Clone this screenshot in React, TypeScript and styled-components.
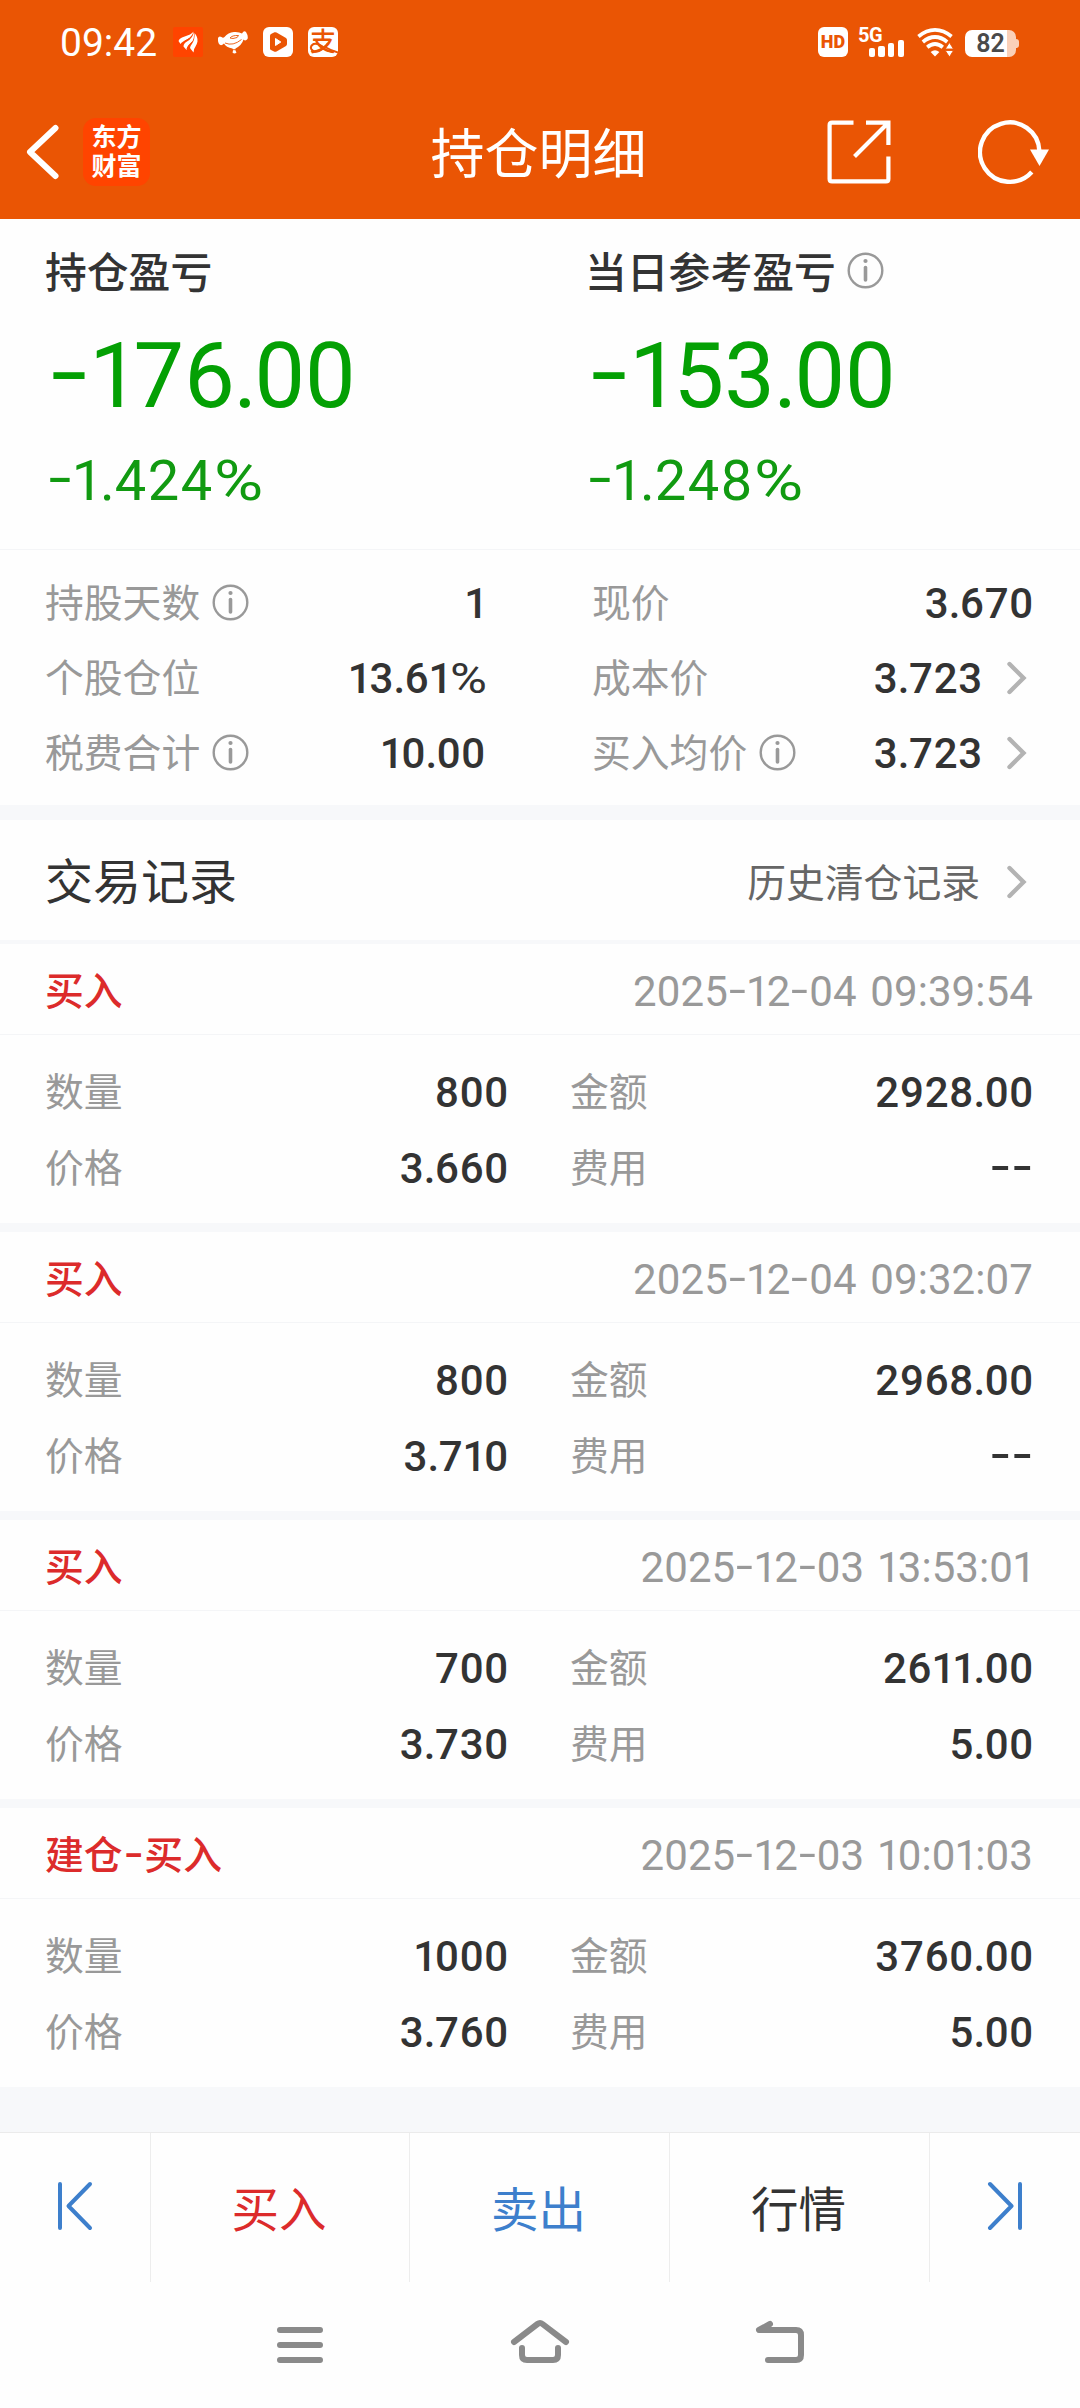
import React from "react";
import styled, { createGlobalStyle } from "styled-components";

const ORANGE = "#ea5504";

const GlobalStyle = createGlobalStyle`
  *, *::before, *::after { box-sizing: border-box; }
  body {
    margin: 0;
    background: #fefefe;
    font-family: Roboto, "Noto Sans CJK SC", sans-serif;
    color: #333;
  }
  svg { display: block; flex: none; }
`;

const Page = styled.div`
  width: 1080px;
  height: 2408px;
  display: flex;
  flex-direction: column;
  overflow: hidden;
  background: #fefefe;
`;

/* ---------- numerals ---------- */

const FigureRun = styled.span`
  white-space: nowrap;
`;

const One = styled.span`
  margin-left: -0.02em;
  margin-right: -0.07em;
`;

const Dot = styled.span`
  margin-left: -0.015em;
  margin-right: -0.03em;
`;

const Dash = styled.span<{ $w: number }>`
  display: inline-block;
  width: ${(p) => p.$w}em;
  letter-spacing: 0;
  text-align: center;
  transform: translateY(-0.05em) scaleX(1.45);
`;

const PercentSign = styled.span`
  display: inline-block;
  width: 0.85em;
  letter-spacing: 0;
  font-weight: 400;
  transform: scaleX(1.2);
  transform-origin: left center;
`;

/* Proportional figures: narrow "1" and ".", wide "-" and "%". */
const Figures = ({ text, dash = 0.47 }: { text: string; dash?: number }) => (
  <FigureRun>
    {text.split(/([-1.%])/).map((part, i) => {
      if (part === "1") return <One key={i}>1</One>;
      if (part === ".") return <Dot key={i}>.</Dot>;
      if (part === "-") return <Dash key={i} $w={dash}>-</Dash>;
      if (part === "%") return <PercentSign key={i}>%</PercentSign>;
      return part;
    })}
  </FigureRun>
);

/* ---------- header ---------- */

const Header = styled.header`
  height: 219px;
  flex: none;
  background: ${ORANGE};
  color: #fff;
`;

const StatusBar = styled.div`
  height: 84px;
  display: flex;
  justify-content: space-between;
  padding: 0 61px 0 60px;
`;

const StatusLeft = styled.div`
  display: flex;
  align-items: center;
  gap: 15px;
`;

const StatusRight = styled.div`
  display: flex;
  align-items: center;
`;

const Clock = styled.span`
  width: 98px;
  padding-top: 2px;
  font-size: 39px;
  line-height: 44px;
  white-space: nowrap;
`;

const AppBadge = styled.span<{ $bg: string; $radius: number }>`
  width: 30px;
  height: 30px;
  border-radius: ${(p) => p.$radius}px;
  background: ${(p) => p.$bg};
  display: flex;
  align-items: center;
  justify-content: center;
`;

const PayBadge = styled(AppBadge)`
  position: relative;
  color: ${ORANGE};
  font-size: 26px;
  font-weight: 500;
  line-height: 28px;

  svg {
    position: absolute;
    left: 0;
    top: 0;
  }
`;

const HdBadge = styled(AppBadge)`
  color: ${ORANGE};
  font-size: 18px;
  font-weight: 900;
  line-height: 30px;
`;

const Signal = styled.span`
  width: 45px;
  height: 30px;
  margin-left: 11px;
  position: relative;
`;

const SignalLabel = styled.span`
  position: absolute;
  left: -1px;
  top: -1px;
  font-size: 20px;
  line-height: 18px;
  font-weight: 700;
  letter-spacing: -0.5px;
`;

const SignalBars = styled.span`
  height: 30px;
  display: flex;
  align-items: flex-end;
  justify-content: flex-end;
  gap: 3.5px;
`;

const Bar = styled.i<{ $h: number }>`
  width: 6.2px;
  height: ${(p) => p.$h}px;
  border-radius: 2px;
  background: #fff;
`;

const Wifi = styled.span`
  margin-left: 13px;
`;

const Battery = styled.span`
  margin: 3px 0 0 11px;
  display: flex;
  align-items: center;
`;

const BatteryBody = styled.span`
  width: 51px;
  height: 27px;
  border-radius: 7px;
  background: linear-gradient(to right, #fff 42px, #fad0b8 42px);
  color: #4a4a4a;
  font-size: 25px;
  font-weight: 600;
  line-height: 28px;
  text-align: center;
`;

const BatteryTip = styled.i`
  width: 3px;
  height: 9px;
  border-radius: 0 3px 3px 0;
  background: #fad0b8;
`;

const TitleBar = styled.div`
  height: 135px;
  display: grid;
  grid-template-columns: 1fr auto 1fr;
  align-items: center;
  padding: 0 29px 0 26px;
`;

const NavLeft = styled.div`
  display: flex;
  align-items: center;
  gap: 24px;
`;

const NavRight = styled.div`
  display: flex;
  align-items: center;
  justify-content: flex-end;
  gap: 87px;
`;

const Logo = styled.span`
  width: 67px;
  height: 68px;
  border-radius: 13px;
  background: #ff4400;
  padding: 5px 0 0 8.5px;
  display: flex;
  flex-direction: column;
  font-size: 25px;
  font-weight: 700;
  line-height: 29px;
  white-space: nowrap;
`;

const Title = styled.h1`
  margin: 0;
  padding-top: 8px;
  font-size: 54px;
  line-height: 70px;
  font-weight: 400;
`;

/* ---------- summary ---------- */

const Summary = styled.section`
  height: 331px;
  flex: none;
  display: grid;
  grid-template-columns: 540px 540px;
  padding-top: 26px;
  border-bottom: 1px solid #f4f5f7;
`;

const SummaryCell = styled.div`
  padding-left: 45px;
  display: flex;
  flex-direction: column;
`;

const SummaryLabel = styled.div`
  height: 54px;
  display: flex;
  align-items: center;
  gap: 11px;
  font-size: 41.8px;
  font-weight: 500;
  line-height: 54px;

  span {
    padding-top: 3px;
  }

  svg {
    margin-top: -3px;
  }
`;

const Profit = styled.div`
  margin-top: 28px;
  padding-left: 2px;
  font-size: 90px;
  line-height: 100px;
  color: #04a004;
`;

const Percent = styled.div`
  margin-top: 19px;
  padding-left: 2px;
  font-size: 56px;
  line-height: 70px;
  letter-spacing: 1.6px;
  color: #119a11;
`;

/* ---------- stats ---------- */

const Stats = styled.section`
  height: 270px;
  flex: none;
  display: grid;
  grid-template-columns: 440px 441px;
  grid-auto-rows: 75px;
  column-gap: 107px;
  padding: 15px 47px 0 45px;
  border-bottom: 15px solid #f7f8fa;
`;

const StatRow = styled.div`
  display: flex;
  align-items: center;
`;

const Label = styled.span`
  display: flex;
  align-items: center;
  gap: 12px;
  font-size: 38.8px;
  line-height: 56px;
  color: #999;

  span {
    padding-top: 3px;
  }

  svg {
    margin-top: -1px;
  }
`;

const Value = styled.span`
  margin-left: auto;
  padding-top: 3px;
  font-size: 42px;
  line-height: 56px;
  font-weight: 500;
  letter-spacing: 0.8px;
  margin-right: -1px;
`;

/* ---------- trade records ---------- */

const SectionHead = styled.div`
  height: 124px;
  flex: none;
  display: flex;
  align-items: center;
  padding: 3px 47px 0 45px;
  border-bottom: 4px solid #f7f8fa;
`;

const SectionTitle = styled.h2`
  margin: 0 auto 0 0;
  padding-top: 2px;
  font-size: 48px;
  line-height: 64px;
  font-weight: 400;
`;

const HistoryLink = styled.a`
  display: flex;
  align-items: center;
  font-size: 38.8px;
  line-height: 56px;
  color: #666;

  span {
    padding-top: 4px;
    margin-right: 2px;
  }
`;

const Record = styled.article`
  height: 288px;
  flex: none;
  border-bottom: 9px solid #f7f8fa;

  &:last-of-type {
    height: 279px;
    border-bottom: 0;
  }
`;

const RecordHead = styled.div`
  height: 91px;
  display: flex;
  align-items: center;
  justify-content: space-between;
  padding: 5px 47px 0 45px;
  border-bottom: 1px solid #f4f5f7;
`;

const Side = styled.span`
  font-size: 38.8px;
  font-weight: 500;
  line-height: 56px;
  color: #dc2b2b;
`;

const Time = styled.time`
  font-size: 42px;
  line-height: 56px;
  letter-spacing: 0.1px;
  word-spacing: 3px;
  color: #999;
`;

const RecordBody = styled.div`
  display: grid;
  grid-template-columns: 463px 463px;
  grid-auto-rows: 76px;
  column-gap: 62px;
  padding: 18px 47px 0 45px;
`;

/* ---------- bottom ---------- */

const Spacer = styled.div`
  height: 45px;
  flex: none;
  background: #f7f8fa;
`;

const ActionBar = styled.nav`
  height: 150px;
  flex: none;
  display: grid;
  grid-template-columns: 151px 259px 260px 260px 150px;
  border-top: 1px solid #ebebeb;
`;

const Action = styled.button<{ $color?: string }>`
  display: flex;
  align-items: center;
  justify-content: center;
  padding: 0 2px 2px 0;
  border: 0;
  border-right: 1px solid #ededed;
  background: none;
  font: inherit;
  font-size: 47.5px;
  color: ${(p) => p.$color ?? "#333"};

  &:last-child {
    border-right: 0;
  }
`;

const ArrowAction = styled(Action)`
  padding: 0 0 4px;
`;

const SystemNav = styled.div`
  flex: 1;
  display: grid;
  grid-template-columns: repeat(3, 240px);
  justify-content: center;
  justify-items: center;
  padding-top: 35px;
`;

/* ---------- icons ---------- */

const InfoIcon = () => (
  <svg width="37" height="37" viewBox="0 0 37 37" fill="none" stroke="#999">
    <circle cx="18.5" cy="18.5" r="16.8" strokeWidth="2.4" />
    <path d="M18.5 15.5V28" strokeWidth="3.6" strokeLinecap="round" />
    <circle cx="18.5" cy="9" r="2.1" fill="#999" stroke="none" />
  </svg>
);

const Chevron = () => (
  <svg width="51" height="34" viewBox="0 0 51 34" fill="none" stroke="#b3b3b3" strokeWidth="4.4" strokeLinecap="round">
    <path d="M27.500 3L41.500 17L27.500 31" />
  </svg>
);

const BackIcon = () => (
  <svg width="33" height="56" viewBox="0 0 33 56" fill="none" stroke="#fff" strokeWidth="6" strokeLinecap="round" strokeLinejoin="round">
    <path d="M29.5 4L4 28L29.5 52" />
  </svg>
);

const ShareIcon = () => (
  <svg width="64" height="64" viewBox="0 0 64 64" fill="none" stroke="#fff" strokeWidth="4.2">
    <path d="M26.5 2.6H5Q2.6 2.6 2.6 5V59Q2.6 61.4 5 61.4H59Q61.4 61.4 61.4 59V36.5" />
    <path d="M39 2.6H61.4V25M61 3L27.5 36.5" />
  </svg>
);

const RefreshIcon = () => (
  <svg width="73" height="66" viewBox="0 0 73 66">
    <path d="M53.8 53A29.7 29.7 0 1 1 61.4 32" fill="none" stroke="#fff" strokeWidth="4.4" />
    <path d="M52 30.500H71L61.500 47Z" fill="#fff" />
  </svg>
);

const WingIcon = () => (
  <svg width="30" height="30" viewBox="0 0 30 30" fill="#fff">
    <path d="M5.500 14Q6 11.500 9 10.500L17 7.500Q20 5.500 20.500 4.500Q19.500 9 14 12.500Q9 14.500 7.500 17Z" />
    <path d="M10.500 19.500Q10.500 16.500 14 14.500Q20 11 20.800 5Q22 12 18 16Q14 19 13.500 23Z" />
    <path d="M17 21Q17.500 18.500 19.500 16Q22 12 21.500 6Q25 10 24.500 14.500Q24 17 22.500 19.500Q20.500 22 20.500 25.500Z" />
    <path d="M8.500 17.500Q12 13 16.500 11.500M14 21.500Q16 17 19.500 14.500" fill="none" stroke="#ff4400" strokeWidth="0.9" />
  </svg>
);

const DogIcon = () => (
  <svg width="30" height="30" viewBox="0 0 30 30" fill="#fff">
    <path d="M0 11Q1 8.500 3.500 10Q5 11.500 6.500 10Q10 5.500 16 5Q21 4.600 24 6.500Q26 3 28 5Q30.500 9 29.500 12Q27.500 14.500 25.500 12.500Q24 18 17.500 21.500Q17 23.500 18.500 25.500Q16.500 27.500 14.500 25.500Q15.500 23 14.500 21.500Q8 20.500 6 16.500Q3 19.500 1 17Q-0.500 14 0 11Z" />
    <path d="M12 11Q14 8.200 20.500 8.500Q20.500 11 15 11.500ZM7 16Q15 19.500 23.500 12.500M13.500 22.700H18.500" fill="none" stroke={ORANGE} strokeWidth="0.9" />
  </svg>
);

const PlayIcon = () => (
  <svg width="30" height="30" viewBox="0 0 30 30">
    <path d="M7 8.500Q7 7.500 8 7L11.500 5.300Q12.500 5 13.500 5.500L23 11Q24 11.800 24 13V17Q24 18.200 23 19L13.500 24.500Q12.500 25 11.500 24.700L8 23Q7 22.500 7 21.500Z" fill={ORANGE} />
    <path d="M12.500 11.500L17.800 15L12.500 18.500Z" fill="#fff" stroke="#fff" strokeWidth="1" strokeLinejoin="round" />
  </svg>
);

const Swoosh = () => (
  <svg width="30" height="30" viewBox="0 0 30 30" fill="none" stroke={ORANGE} strokeWidth="2">
    <path d="M17 21.500Q10 15.500 5.500 17Q2 18.800 3.200 22Q5.500 26 11 24Q16 22 20 16M16 19.500Q22 23 30 25.500" />
  </svg>
);

const WifiIcon = () => (
  <svg width="37" height="30" viewBox="0 0 38 30" preserveAspectRatio="none" fill="none" stroke="#fff" strokeWidth="3.8">
    <path d="M1.500 9.500Q9.500 2.800 18.500 2.800T35.500 9.500" />
    <path d="M6 15Q12 10 18.500 10T31 15" />
    <path d="M10.500 20.300Q14.500 17 18.500 17T26.500 20.300" />
    <path d="M14 25Q18.500 21.500 23 25L18.500 29.500Z" fill="#fff" stroke="none" />
    <path d="M29 22L33.300 15.500L37.500 22ZM29 23.500L33.300 30L37.500 23.500Z" fill="#fff" stroke={ORANGE} strokeWidth="0.9" />
  </svg>
);

const FirstIcon = () => (
  <svg width="38" height="50" viewBox="0 0 38 50" fill="none" stroke="#3d7fcc" strokeWidth="4" strokeLinecap="round" strokeLinejoin="round">
    <path d="M4 3V47M34 3L12.500 25L34 47" />
  </svg>
);

const LastIcon = () => (
  <svg width="38" height="50" viewBox="0 0 38 50" fill="none" stroke="#3d7fcc" strokeWidth="4" strokeLinecap="round" strokeLinejoin="round">
    <path d="M34 3V47M4 3L25.500 25L4 47" />
  </svg>
);

const SysIcon = ({ d }: { d: string }) => (
  <svg width="60" height="50" viewBox="0 0 60 50" fill="none" stroke="#8a8a8a" strokeWidth="6" strokeLinecap="round" strokeLinejoin="round">
    <path d={d} />
  </svg>
);

/* ---------- data ---------- */

const summary = [
  { label: "持仓盈亏", profit: "-176.00", percent: "-1.424%", info: false },
  { label: "当日参考盈亏", profit: "-153.00", percent: "-1.248%", info: true },
];

const stats = [
  { label: "持股天数", value: "1", info: true },
  { label: "现价", value: "3.670" },
  { label: "个股仓位", value: "13.61%" },
  { label: "成本价", value: "3.723", link: true },
  { label: "税费合计", value: "10.00", info: true },
  { label: "买入均价", value: "3.723", info: true, link: true },
];

const records = [
  { side: "买入", time: "2025-12-04 09:39:54", qty: "800", amount: "2928.00", price: "3.660", fee: "--" },
  { side: "买入", time: "2025-12-04 09:32:07", qty: "800", amount: "2968.00", price: "3.710", fee: "--" },
  { side: "买入", time: "2025-12-03 13:53:01", qty: "700", amount: "2611.00", price: "3.730", fee: "5.00" },
  { side: "建仓-买入", time: "2025-12-03 10:01:03", qty: "1000", amount: "3760.00", price: "3.760", fee: "5.00" },
];

const Field = ({ label, value, info, link }: { label: string; value: string; info?: boolean; link?: boolean }) => (
  <StatRow>
    <Label>
      <span>{label}</span>
      {info && <InfoIcon />}
    </Label>
    <Value>
      <Figures text={value} dash={0.54} />
    </Value>
    {link && <Chevron />}
  </StatRow>
);

export default function App() {
  return (
    <>
      <GlobalStyle />
      <Page>
        <Header>
          <StatusBar>
            <StatusLeft>
              <Clock>09:42</Clock>
              <AppBadge $bg="#ff4400" $radius={2}><WingIcon /></AppBadge>
              <DogIcon />
              <AppBadge $bg="#fff" $radius={6}><PlayIcon /></AppBadge>
              <PayBadge $bg="#fff" $radius={6}>支<Swoosh /></PayBadge>
            </StatusLeft>
            <StatusRight>
              <HdBadge $bg="#fff" $radius={6}>HD</HdBadge>
              <Signal>
                <SignalLabel>5G</SignalLabel>
                <SignalBars>
                  <Bar $h={9} />
                  <Bar $h={11} />
                  <Bar $h={14} />
                  <Bar $h={17} />
                </SignalBars>
              </Signal>
              <Wifi><WifiIcon /></Wifi>
              <Battery>
                <BatteryBody>82</BatteryBody>
                <BatteryTip />
              </Battery>
            </StatusRight>
          </StatusBar>
          <TitleBar>
            <NavLeft>
              <BackIcon />
              <Logo>
                <span>东方</span>
                <span>财富</span>
              </Logo>
            </NavLeft>
            <Title>持仓明细</Title>
            <NavRight>
              <ShareIcon />
              <RefreshIcon />
            </NavRight>
          </TitleBar>
        </Header>

        <Summary>
          {summary.map((s) => (
            <SummaryCell key={s.label}>
              <SummaryLabel>
                <span>{s.label}</span>
                {s.info && <InfoIcon />}
              </SummaryLabel>
              <Profit><Figures text={s.profit} dash={0.49} /></Profit>
              <Percent><Figures text={s.percent} dash={0.46} /></Percent>
            </SummaryCell>
          ))}
        </Summary>

        <Stats>
          {stats.map((s) => (
            <Field key={s.label} {...s} />
          ))}
        </Stats>

        <SectionHead>
          <SectionTitle>交易记录</SectionTitle>
          <HistoryLink>
            <span>历史清仓记录</span>
            <Chevron />
          </HistoryLink>
        </SectionHead>

        {records.map((r) => (
          <Record key={r.time}>
            <RecordHead>
              <Side><Figures text={r.side} dash={0.56} /></Side>
              <Time><Figures text={r.time} dash={0.45} /></Time>
            </RecordHead>
            <RecordBody>
              <Field label="数量" value={r.qty} />
              <Field label="金额" value={r.amount} />
              <Field label="价格" value={r.price} />
              <Field label="费用" value={r.fee} />
            </RecordBody>
          </Record>
        ))}

        <Spacer />
        <ActionBar>
          <ArrowAction><FirstIcon /></ArrowAction>
          <Action $color="#dc2b2b">买入</Action>
          <Action $color="#3d7fcc">卖出</Action>
          <Action>行情</Action>
          <ArrowAction><LastIcon /></ArrowAction>
        </ActionBar>
        <SystemNav>
          <SysIcon d="M10 13H50M10 28H50M10 43H50" />
          <SysIcon d="M4 25L27.500 7Q30 5 32.500 7L56 25M12 31V38Q12 43 17 43H43Q48 43 48 38V31" />
          <SysIcon d="M20 7L9 13H46Q51 13 51 18V38Q51 43 46 43H18" />
        </SystemNav>
      </Page>
    </>
  );
}
